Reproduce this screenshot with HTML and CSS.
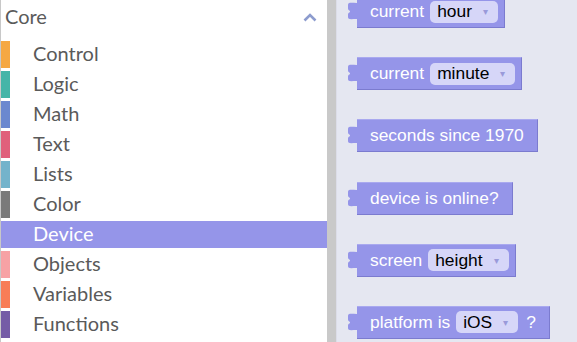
FILE: index.html
```html
<!DOCTYPE html>
<html lang="en">
<head>
    <meta charset="UTF-8">
    <meta name="viewport" content="width=device-width, initial-scale=1.0">
    <title>Blocks</title>
    <link rel="stylesheet" href="styles.css">
</head>
<body>
    <div class="app">
        <aside class="toolbox">
            <div class="toolbox-head">
                <span class="label">Core</span>
                <svg class="chevron" width="14" height="9" viewBox="0 0 14 9">
                    <polyline points="1.5,7.5 7,2 12.5,7.5" />
                </svg>
            </div>
            <ul class="cats">
                <li class="cat"><span class="swatch control"></span><span class="label">Control</span></li>
                <li class="cat"><span class="swatch logic"></span><span class="label">Logic</span></li>
                <li class="cat"><span class="swatch math"></span><span class="label">Math</span></li>
                <li class="cat"><span class="swatch text"></span><span class="label">Text</span></li>
                <li class="cat"><span class="swatch lists"></span><span class="label">Lists</span></li>
                <li class="cat"><span class="swatch color"></span><span class="label">Color</span></li>
                <li class="cat selected"><span class="swatch device"></span><span class="label">Device</span></li>
                <li class="cat"><span class="swatch objects"></span><span class="label">Objects</span></li>
                <li class="cat"><span class="swatch variables"></span><span class="label">Variables</span></li>
                <li class="cat"><span class="swatch functions"></span><span class="label">Functions</span></li>
            </ul>
        </aside>

        <div class="divider"></div>

        <main class="flyout">
            <div class="block">
                <svg class="tab" width="10" height="33" viewBox="0 0 10 33"><path d="M10,8 C4,8 1,7 1,10 L1,13 C1,16 3,15 3,16.5 C3,18 1,17 1,20 L1,22 C1,25 4,24 10,24 Z" /></svg>
                <div class="block-body"><span>current</span><span class="field">hour<i>&#9662;</i></span></div>
            </div>
            <div class="block">
                <svg class="tab" width="10" height="33" viewBox="0 0 10 33"><path d="M10,8 C4,8 1,7 1,10 L1,13 C1,16 3,15 3,16.5 C3,18 1,17 1,20 L1,22 C1,25 4,24 10,24 Z" /></svg>
                <div class="block-body"><span>current</span><span class="field">minute<i>&#9662;</i></span></div>
            </div>
            <div class="block">
                <svg class="tab" width="10" height="33" viewBox="0 0 10 33"><path d="M10,8 C4,8 1,7 1,10 L1,13 C1,16 3,15 3,16.5 C3,18 1,17 1,20 L1,22 C1,25 4,24 10,24 Z" /></svg>
                <div class="block-body"><span>seconds since 1970</span></div>
            </div>
            <div class="block">
                <svg class="tab" width="10" height="33" viewBox="0 0 10 33"><path d="M10,8 C4,8 1,7 1,10 L1,13 C1,16 3,15 3,16.5 C3,18 1,17 1,20 L1,22 C1,25 4,24 10,24 Z" /></svg>
                <div class="block-body"><span>device is online?</span></div>
            </div>
            <div class="block">
                <svg class="tab" width="10" height="33" viewBox="0 0 10 33"><path d="M10,8 C4,8 1,7 1,10 L1,13 C1,16 3,15 3,16.5 C3,18 1,17 1,20 L1,22 C1,25 4,24 10,24 Z" /></svg>
                <div class="block-body"><span>screen</span><span class="field">height<i>&#9662;</i></span></div>
            </div>
            <div class="block">
                <svg class="tab" width="10" height="33" viewBox="0 0 10 33"><path d="M10,8 C4,8 1,7 1,10 L1,13 C1,16 3,15 3,16.5 C3,18 1,17 1,20 L1,22 C1,25 4,24 10,24 Z" /></svg>
                <div class="block-body"><span>platform is</span><span class="field">iOS<i>&#9662;</i></span><span class="qmark">?</span></div>
            </div>
        </main>
    </div>
</body>
</html>
```

FILE: styles.css
```css
body {
    margin: 0;
    overflow: hidden;
    font-family: Lato, "Liberation Sans", sans-serif;
}
.app {
    display: flex;
    height: 342px;
}
.toolbox {
    width: 326px;
    border-left: 1px solid #c8c8c8;
    background: #fff;
    color: #5a5a5a;
    font-size: 20px;
}
.toolbox-head {
    height: 34px;
    display: flex;
    align-items: center;
    justify-content: space-between;
    padding: 0 10px 0 4px;
}
.label {
    margin-bottom: 3px;
}
.chevron polyline {
    fill: none;
    stroke: #8d9cce;
    stroke-width: 2.6;
}
.cats {
    list-style-type: none;
    margin: 7px 0 0;
    padding: 0;
}
.cat {
    height: 27px;
    margin-bottom: 3px;
    display: flex;
    align-items: center;
}
.cat.selected {
    background: #9595e9;
    color: #fff;
}
.swatch {
    width: 9px;
    height: 27px;
    margin-right: 23px;
}
.control { background: #f5a843; }
.logic { background: #45b5a8; }
.math { background: #6b88cf; }
.text { background: #e0607b; }
.lists { background: #74b3cb; }
.color { background: #7a7a7a; }
.device { background: #9595e9; }
.objects { background: #f7a2a5; }
.variables { background: #f87d57; }
.functions { background: #755ca6; }

.divider {
    width: 9px;
    background: #c9c9c9;
}
.flyout {
    flex: 1;
    background: #e5e7f1;
    border-left: 1px solid #dcdde8;
    padding-left: 10px;
    display: flex;
    flex-direction: column;
    align-items: flex-start;
    gap: 29.2px;
    margin-top: -5px;
    font-family: "Liberation Sans", Arial, sans-serif;
    font-size: 17.4px;
}
.block {
    display: flex;
    height: 33px;
}
.tab {
    display: block;
    flex: none;
}
.tab path {
    fill: #9595e9;
}
.block-body {
    box-sizing: border-box;
    height: 33px;
    display: flex;
    align-items: center;
    gap: 6px;
    padding: 0 13px;
    background: #9595e9;
    border-top: 1px solid #a9a9ef;
    border-right: 1px solid #7b7bcf;
    border-bottom: 1px solid #7b7bcf;
    color: #fff;
    white-space: nowrap;
}
.field {
    display: flex;
    align-items: center;
    height: 22px;
    padding: 0 10px 0 7px;
    border-radius: 5px;
    background: #d6d6f8;
    color: #000;
}
.field:last-child {
    margin-right: -7px;
}
.field i {
    font-style: normal;
    font-size: 10px;
    color: #9a9ada;
    margin-left: 11px;
}
.qmark {
    margin-left: 2px;
}
```
